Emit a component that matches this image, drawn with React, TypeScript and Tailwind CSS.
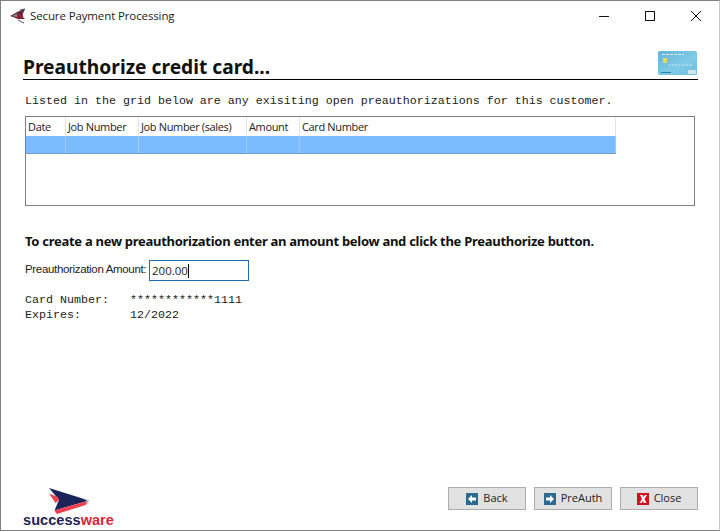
import type { ReactNode } from 'react'

const columns = [
  { label: 'Date', width: 'w-[40px]' },
  { label: 'Job Number', width: 'w-[73px]' },
  { label: 'Job Number (sales)', width: 'w-[108px]' },
  { label: 'Amount', width: 'w-[53px]' },
  { label: 'Card Number', width: 'w-[316px]' },
]

function AppIcon() {
  return (
    <svg width="18" height="16" viewBox="0 0 18 16">
      <path d="M1 8 L10 3 L16 1 L13 8 L16 11 L9 11 Z" fill="#5a3346" />
      <path d="M7 7 L14 4 L13 10 L8 11 Z" fill="#b3182f" />
      <path d="M3 8 L9 5 L8 9 Z" fill="#8d8592" />
      <path d="M9 12 L15 15 M11 2 L16 1 M8 5 L11 11 M11 4 L14 9" stroke="#2a2230" strokeWidth="0.8" />
    </svg>
  )
}

function CardIcon() {
  return (
    <svg width="39" height="25" viewBox="0 0 39 25">
      <defs>
        <linearGradient id="card" x1="0" y1="0" x2="1" y2="1">
          <stop offset="0" stopColor="#62b4d6" />
          <stop offset="0.6" stopColor="#7fcbe6" />
          <stop offset="1" stopColor="#6cbcdc" />
        </linearGradient>
      </defs>
      <rect width="39" height="24" rx="1.5" fill="url(#card)" />
      <rect x="5" y="7" width="4" height="5" fill="#e4d65a" />
      <path d="M4 3.5 H26" stroke="#d6eef6" strokeWidth="1" strokeDasharray="3 1" />
      <path d="M11 14 H34" stroke="#c4e6f2" strokeWidth="1" strokeDasharray="2 1" />
      <path d="M3 21.5 H13" stroke="#2f7f9f" strokeWidth="1" />
      <rect x="30" y="19" width="8" height="4" fill="#cfe6ef" />
    </svg>
  )
}

function Logo() {
  return (
    <div className="mt-[1px] flex w-[91px] flex-col items-center">
      <svg width="40" height="26" viewBox="3 0 36 29" preserveAspectRatio="none">
        <path d="M3 0 L39 14 L8 25 L12 13 Z" fill="#1b2358" />
        <path d="M3 6 L11 10 L12 13 L9 17 Z" fill="#ee3f4f" />
        <path d="M8 25 L39 14 L36 19 L10 29 Z" fill="#ee3f4f" />
        <path d="M30 10 L39 14 L36 17 L37 14 Z" fill="#a6dcd6" />
      </svg>
      <div className="text-[14.5px] leading-[13px] font-bold tracking-[0.05px] whitespace-nowrap font-['Liberation_Sans',sans-serif]">
        <span className="text-[#1b2358]">success</span>
        <span className="text-[#d9263a]">ware</span>
      </div>
    </div>
  )
}

function FooterButton({ icon, label }: { icon: ReactNode; label: string }) {
  return (
    <button className="flex h-[23px] w-[78px] items-center justify-center gap-[5px] border border-[#adadad] bg-[#e1e1e1] text-[11px] text-[#222] font-['Open_Sans',sans-serif]">
      {icon}
      {label}
    </button>
  )
}

function ArrowIcon({ dir }: { dir: 'left' | 'right' }) {
  return (
    <svg width="12" height="12" viewBox="0 0 12 12">
      <rect width="12" height="12" fill="#2b6a8e" />
      {dir === 'left' ? (
        <path d="M2 6 L6 2 V4.5 H10 V7.5 H6 V10 Z" fill="#fff" />
      ) : (
        <path d="M10 6 L6 2 V4.5 H2 V7.5 H6 V10 Z" fill="#fff" />
      )}
    </svg>
  )
}

function CloseIcon() {
  return (
    <svg width="12" height="12" viewBox="0 0 12 12">
      <rect width="12" height="12" fill="#d0101c" />
      <path d="M3 2 H5.5 L6.5 4 L8 2 H10 L7.5 6 L9.5 10 H7 L6 8 L4.5 10 H2.5 L5 6 Z" fill="#fff" />
    </svg>
  )
}

export default function App() {
  return (
    <div className="flex h-[531px] w-[720px] flex-col border border-[#808080] border-r-[#c8c8c8] bg-white font-['Open_Sans',sans-serif]">
      {/* title bar */}
      <div className="flex h-[30px] items-center">
        <div className="ml-[8px] flex w-[21px]">
          <AppIcon />
        </div>
        <span className="text-[11.5px] tracking-[-0.12px] text-[#222]">Secure Payment Processing</span>
        <div className="ml-auto flex items-center">
          <svg width="46" height="30" viewBox="0 0 46 30">
            <path d="M18 15.5 H28" stroke="#111" strokeWidth="1" />
          </svg>
          <svg width="46" height="30" viewBox="0 0 46 30">
            <rect x="18.5" y="10.5" width="9" height="9" fill="none" stroke="#111" strokeWidth="1" />
          </svg>
          <svg width="46" height="30" viewBox="0 0 46 30">
            <path d="M18 10 L28 20 M28 10 L18 20" stroke="#111" strokeWidth="1" />
          </svg>
        </div>
      </div>

      <div className="flex flex-1 flex-col px-[22px] pt-[19px] pb-[4px]">
        {/* heading */}
        <div className="flex h-[30px] w-[675px] items-end justify-between border-b border-black">
          <h1 className="mb-[-1px] text-[19.2px] leading-[27px] font-bold text-[#111] font-['Noto_Sans',sans-serif]">
            Preauthorize credit card...
          </h1>
          <div className="mr-[1px] mb-[3px]">
            <CardIcon />
          </div>
        </div>

        <p className="mt-[14px] ml-[2px] text-[11.67px] leading-[14px] text-[#222] font-['Liberation_Mono',monospace]">
          Listed in the grid below are any exisiting open preauthorizations for this customer.
        </p>

        {/* grid */}
        <div className="mt-[8px] ml-[2px] h-[90px] w-[670px] border border-[#808080] bg-white">
          <div className="flex h-[19px] w-[590px] text-[11px] leading-[19px] tracking-[-0.35px] text-[#222] font-['Open_Sans',sans-serif]">
            {columns.map((c) => (
              <div key={c.label} className={`${c.width} border-r border-[#e4e4e4] pl-[2px] whitespace-nowrap`}>
                {c.label}
              </div>
            ))}
          </div>
          <div className="flex h-[18px] w-[590px] border-b border-[#6f9fce] bg-[#7abcff]">
            {columns.map((c) => (
              <div key={c.label} className={`${c.width} border-r border-[#9fcdf5]`} />
            ))}
          </div>
        </div>

        <p className="mt-[27px] ml-[2px] text-[13px] leading-[17px] font-bold tracking-[-0.28px] text-[#111] font-['Noto_Sans',sans-serif] whitespace-nowrap">
          To create a new preauthorization enter an amount below and click the Preauthorize button.
        </p>

        <div className="mt-[10px] ml-[2px] flex items-center">
          <span className="mt-[-1px] w-[124px] text-[11.5px] tracking-[-0.33px] whitespace-nowrap text-[#222] font-['Liberation_Sans',sans-serif]">Preauthorization Amount:</span>
          <div className="flex h-[21px] w-[100px] items-center border border-[#1f6fae] pl-[2px] text-[11.5px] text-[#222]">
            200.00
            <span className="h-[14px] w-px bg-black" />
          </div>
        </div>

        <div className="mt-[12px] ml-[2px] grid grid-cols-[105px_auto] justify-start text-[11.67px] leading-[15px] text-[#222] font-['Liberation_Mono',monospace]">
          <span>Card Number:</span>
          <span>************1111</span>
          <span>Expires:</span>
          <span>12/2022</span>
        </div>

        {/* footer */}
        <div className="mt-auto flex h-[39px] w-[675px] items-start justify-between">
          <Logo />
          <div className="flex gap-[8px]">
            <FooterButton icon={<ArrowIcon dir="left" />} label="Back" />
            <FooterButton icon={<ArrowIcon dir="right" />} label="PreAuth" />
            <FooterButton icon={<CloseIcon />} label="Close" />
          </div>
        </div>
      </div>
    </div>
  )
}
